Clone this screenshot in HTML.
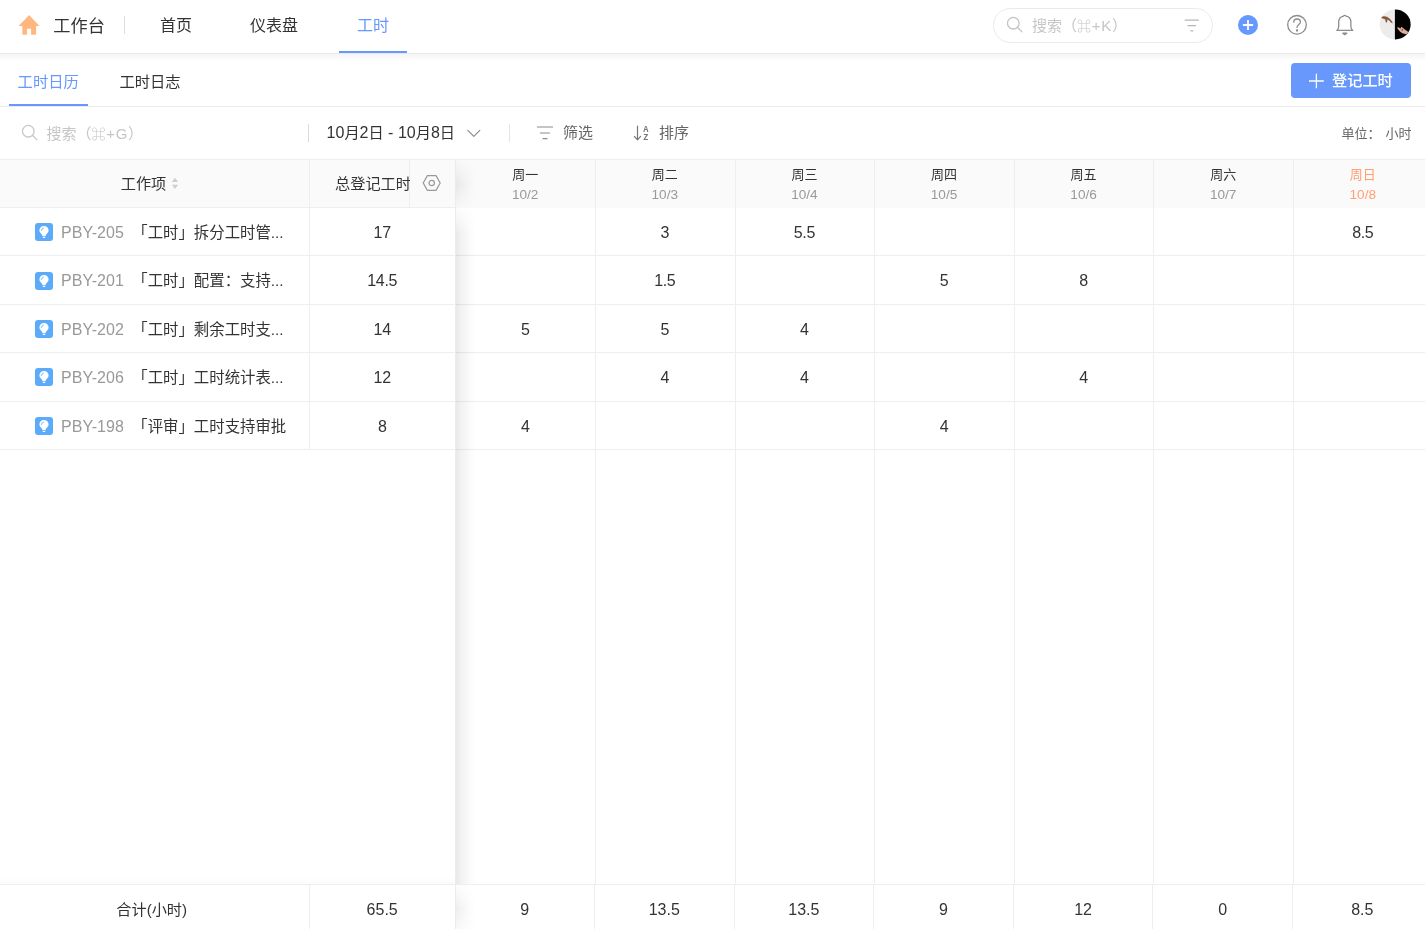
<!DOCTYPE html>
<html lang="zh-CN">
<head>
<meta charset="utf-8">
<title>工时日历</title>
<style>
*{box-sizing:border-box;margin:0;padding:0}
html,body{width:1425px;height:929px;overflow:hidden;background:#fff}
body{font-family:"Liberation Sans","Noto Sans CJK SC",sans-serif;color:#333;position:relative;font-size:15px}
#root{position:absolute;left:0;top:0;width:1425px;height:929px;opacity:.999}
.abs{position:absolute}
.t{position:absolute;white-space:nowrap;line-height:20px;height:20px}
.c{position:absolute;white-space:nowrap;text-align:center;line-height:20px;height:20px}
/* top header */
#hdr{position:absolute;left:0;top:0;width:1425px;height:54px;border-bottom:1px solid #ebebeb}
#hdrshadow{position:absolute;left:0;top:54px;width:1425px;height:7px;background:linear-gradient(#f5f5f5,#fff)}
.nav{font-size:16px;color:#333}
/* sub tabs */
#tabs{position:absolute;left:0;top:54px;width:1425px;height:53px;border-bottom:1px solid #eaeaea}
/* table */
.hl{position:absolute;height:1px;background:#eee}
.vl{position:absolute;width:1px;background:#eee}
.num{font-size:16px;color:#333;letter-spacing:-.3px}
.key{font-size:16px;color:#999;letter-spacing:.05px}
.l{font-size:16px}
.cmd{font-size:14px;font-weight:700}
.ls{letter-spacing:.7px}
.day{font-size:13px;color:#333}
.date{font-size:13.6px;color:#999}
.shadow{background:linear-gradient(to right,rgba(0,0,0,.085) 0,rgba(0,0,0,.06) 4px,rgba(0,0,0,.038) 8px,rgba(0,0,0,.016) 14px,rgba(0,0,0,0) 20px)}
</style>
</head>
<body>
<div id="root">
<!-- ===== header ===== -->
<div id="hdrshadow"></div>
<div id="hdr"></div>
<svg class="abs" style="left:18px;top:14px" width="22" height="22" viewBox="0 0 22 22"><path d="M11.16 0.9 L21.5 11.9 H18.05 V19.7 Q18.05 20.7 17.05 20.7 H13.1 V14.7 H9 V20.7 H5.3 Q4.3 20.7 4.3 19.7 V11.9 H0.6 Z" fill="#ffb77f"/></svg>
<div class="t" style="left:53.3px;top:16px;font-size:17.2px">工作台</div>
<div class="vl" style="left:124px;top:16px;height:18px;background:#ddd"></div>
<div class="t nav" style="left:160px;top:16px">首页</div>
<div class="t nav" style="left:250px;top:16px">仪表盘</div>
<div class="t nav" style="left:357px;top:16px;color:#6698ff">工时</div>
<div class="abs" style="left:339px;top:51px;width:68px;height:2px;background:#6698ff"></div>

<!-- ===== sub tabs ===== -->
<div id="tabs"></div>
<div class="t" style="left:17.6px;top:72px;font-size:15.3px;color:#6698ff">工时日历</div>
<div class="abs" style="left:9px;top:104px;width:79px;height:2px;background:#6698ff"></div>
<div class="t" style="left:119.4px;top:72px;font-size:15.3px">工时日志</div>


<!-- header search -->
<div class="abs" style="left:993px;top:8px;width:220px;height:35px;border:1px solid #eaeaea;border-radius:18px"></div>
<svg class="abs" style="left:1005px;top:15px" width="20" height="20" viewBox="0 0 20 20" fill="none" stroke="#c4c4c4" stroke-width="1.3" stroke-linecap="round"><circle cx="8.3" cy="8.2" r="5.8"/><path d="M12.6 12.5 L17 16.9"/></svg>
<div class="t" style="left:1032px;top:16px;font-size:15px;color:#c6c6c6">搜索（<span class="ls"><span class="cmd">⌘</span>+K</span>）</div>
<svg class="abs" style="left:1184px;top:17px" width="16" height="16" viewBox="0 0 16 16" fill="none" stroke="#b5b5b5" stroke-width="1.2" stroke-linecap="round"><path d="M1.2 3.2 H14.4 M4 8.6 H11.6 M6.8 13.8 H8.8"/></svg>
<!-- plus -->
<div class="abs" style="left:1238px;top:14.7px;width:20px;height:20px;border-radius:50%;background:#6698ff"></div>
<svg class="abs" style="left:1238px;top:14.7px" width="20" height="20" viewBox="0 0 20 20" fill="none" stroke="#fff" stroke-width="1.8"><path d="M10 4.9 V15.1 M4.9 10 H15.1"/></svg>
<!-- help -->
<svg class="abs" style="left:1286px;top:14px" width="22" height="22" viewBox="0 0 22 22" fill="none" stroke="#8c8c8c" stroke-width="1.3" stroke-linecap="round" stroke-linejoin="round"><circle cx="11" cy="10.8" r="9.3"/><path d="M7.7 8.2 C7.7 6.2 9.2 5 11 5 C12.9 5 14.4 6.2 14.4 8 C14.4 10.6 11 10.4 11 13.4"/><circle cx="11" cy="16.4" r="0.55" fill="#8c8c8c"/></svg>
<!-- bell -->
<svg class="abs" style="left:1334px;top:13px" width="22" height="24" viewBox="0 0 22 24" fill="none" stroke="#8c8c8c" stroke-width="1.3" stroke-linecap="round" stroke-linejoin="round"><path d="M2.8 17.4 H18.8 C17.3 16.2 16.9 15 16.9 13.4 V9.4 C16.9 5.6 14.6 3.4 11.9 3.1 C11.9 2.2 9.7 2.2 9.7 3.1 C7 3.4 4.7 5.6 4.7 9.4 V13.4 C4.7 15 4.3 16.2 2.8 17.4 Z"/><path d="M8.8 20.2 H12.8 L10.8 21.6 Z" fill="#8c8c8c"/></svg>
<!-- avatar -->
<svg class="abs" style="left:1379.4px;top:9.3px" width="32" height="31" viewBox="0 0 32 31"><defs><clipPath id="av"><ellipse cx="16.15" cy="15.4" rx="15.5" ry="15"/></clipPath></defs><g clip-path="url(#av)"><rect width="32" height="31" fill="#ecedeb"/><rect x="15.9" width="17" height="31" fill="#020202"/><path d="M1.7 9 C3 7.2 5.5 6.6 8 7.8 C10.5 9 13 11.5 13.8 14.2 C13 14.6 12 13.8 11 12.6 C10.2 11.6 9.2 10.8 8.2 10.6 C8.6 11.8 8.4 13.2 7.4 13.8 C6.6 13.4 6.4 12 6.2 10.6 C5.4 9.6 3.4 9.6 1.7 9 Z" fill="#8a583a"/><path d="M17.9 18.6 C19.5 18.4 20.8 19 21.6 19.6 L22.2 17.8 C23.4 18.4 24.6 19.6 25.8 20.4 C27 21.2 28.4 22 29.4 23 L27.8 25.2 C26 25 23.8 24.4 22.2 23.4 C20.6 22.4 19 20.6 17.9 18.6 Z" fill="#e0ae9c"/><circle cx="23.3" cy="20.8" r="0.9" fill="#7a4a3a"/></g></svg>

<!-- register button -->
<div class="abs" style="left:1291px;top:63px;width:120px;height:35px;border-radius:4px;background:#6898fb"></div>
<svg class="abs" style="left:1308px;top:72.7px" width="16" height="16" viewBox="0 0 16 16" fill="none" stroke="#fff" stroke-width="1.3"><path d="M8.4 0.8 V15.2 M1 8 H15.8"/></svg>
<div class="t" style="left:1332px;top:70.5px;font-size:15.2px;color:#fff;font-weight:500">登记工时</div>

<!-- toolbar -->
<svg class="abs" style="left:20px;top:123px" width="20" height="20" viewBox="0 0 20 20" fill="none" stroke="#c8c8c8" stroke-width="1.3" stroke-linecap="round"><circle cx="8.3" cy="8.2" r="5.8"/><path d="M12.6 12.5 L17 16.9"/></svg>
<div class="t" style="left:46.5px;top:124px;font-size:15px;color:#c6c6c6">搜索（<span class="ls"><span class="cmd">⌘</span>+G</span>）</div>
<div class="vl" style="left:308px;top:124px;height:18px;background:#dcdcdc"></div>
<div class="t" id="daterange" style="left:326.6px;top:122.5px;font-size:15.2px;color:#333"><span class="l">10</span>月<span class="l">2</span>日<span class="l"> - 10</span>月<span class="l">8</span>日</div>
<svg class="abs" style="left:466px;top:127px" width="16" height="12" viewBox="0 0 16 12" fill="none" stroke="#8c8c8c" stroke-width="1.2" stroke-linecap="round" stroke-linejoin="round"><path d="M1.8 3.3 L7.8 9.3 L13.8 3.3"/></svg>
<div class="vl" style="left:509px;top:124px;height:18px;background:#e4e4e4"></div>
<svg class="abs" style="left:536px;top:124px" width="18" height="18" viewBox="0 0 18 18" fill="none" stroke="#8c8c8c" stroke-width="1.2" stroke-linecap="round"><path d="M1.4 3 H16.6 M4.4 9 H13.6 M7 14.7 H11"/></svg>
<div class="t" style="left:563px;top:122.5px;font-size:15px;color:#666">筛选</div>
<svg class="abs" style="left:632px;top:123px" width="20" height="20" viewBox="0 0 20 20" fill="none" stroke="#777" stroke-width="1.2" stroke-linecap="round" stroke-linejoin="round"><path d="M5.5 3 V16.6 M2.4 13.4 L5.5 16.8 L8.6 13.4"/><text x="11.2" y="9.4" font-family="Liberation Mono,monospace" font-size="8.6" font-weight="700" fill="#777" stroke="none">A</text><text x="11.2" y="17.1" font-family="Liberation Mono,monospace" font-size="8.6" font-weight="700" fill="#777" stroke="none">Z</text></svg>
<div class="t" style="left:659px;top:122.5px;font-size:15px;color:#666">排序</div>
<div class="t" style="left:1341.5px;top:124px;font-size:13px;color:#666;word-spacing:1.3px">单位： 小时</div>
<!-- table -->
<div class="abs" style="left:0;top:160px;width:456px;height:47px;background:#fafafa"></div>
<div class="abs" style="left:456px;top:160px;width:969px;height:48px;background:#fafafa"></div>
<div class="hl" style="left:0;top:159px;width:1425px"></div>
<div class="hl" style="left:0;top:207px;width:456px"></div>
<div class="hl" style="left:0;top:255px;width:1425px"></div>
<div class="hl" style="left:0;top:304px;width:1425px"></div>
<div class="hl" style="left:0;top:352px;width:1425px"></div>
<div class="hl" style="left:0;top:401px;width:1425px"></div>
<div class="hl" style="left:0;top:449px;width:1425px"></div>
<div class="vl" style="left:595px;top:160px;height:724px"></div>
<div class="vl" style="left:594px;top:885px;height:44px"></div>
<div class="vl" style="left:735px;top:160px;height:724px"></div>
<div class="vl" style="left:734px;top:885px;height:44px"></div>
<div class="vl" style="left:874px;top:160px;height:724px"></div>
<div class="vl" style="left:873px;top:885px;height:44px"></div>
<div class="vl" style="left:1014px;top:160px;height:724px"></div>
<div class="vl" style="left:1013px;top:885px;height:44px"></div>
<div class="vl" style="left:1153px;top:160px;height:724px"></div>
<div class="vl" style="left:1152px;top:885px;height:44px"></div>
<div class="vl" style="left:1293px;top:160px;height:724px"></div>
<div class="vl" style="left:1292px;top:885px;height:44px"></div>
<div class="hl" style="left:0;top:884px;width:1425px"></div>
<div class="vl" style="left:309px;top:160px;height:290px"></div>
<div class="vl" style="left:309px;top:885px;height:44px"></div>
<div class="vl" style="left:455px;top:160px;height:769px;background:#ececec"></div>
<div class="vl" style="left:409px;top:160px;height:47px"></div>
<div class="abs shadow" style="left:456px;top:160px;width:22px;height:48px;-webkit-mask-image:linear-gradient(to bottom,rgba(0,0,0,.1) 0,rgba(0,0,0,.9) 52%,rgba(0,0,0,.15) 100%);mask-image:linear-gradient(to bottom,rgba(0,0,0,.1) 0,rgba(0,0,0,.9) 52%,rgba(0,0,0,.15) 100%)"></div>
<div class="abs shadow" style="left:456px;top:208px;width:22px;height:676px;-webkit-mask-image:linear-gradient(to bottom,rgba(0,0,0,.1) 0,#000 26px);mask-image:linear-gradient(to bottom,rgba(0,0,0,.1) 0,#000 26px)"></div>
<div class="abs shadow" style="left:456px;top:885px;width:22px;height:44px;-webkit-mask-image:linear-gradient(to bottom,rgba(0,0,0,.08) 0,rgba(0,0,0,.85) 24px,rgba(0,0,0,.35) 44px);mask-image:linear-gradient(to bottom,rgba(0,0,0,.08) 0,rgba(0,0,0,.85) 24px,rgba(0,0,0,.35) 44px)"></div>
<div class="abs" style="left:0;top:874px;width:455px;height:10px;background:linear-gradient(to bottom,rgba(0,0,0,0),rgba(0,0,0,.012))"></div>
<div class="c" style="left:93.5px;top:174px;width:100px;font-size:15.2px">工作项</div>
<svg class="abs" style="left:171.4px;top:177.4px" width="8" height="13" viewBox="0 0 8 13"><path d="M4 0.8 L7.2 5 H0.8 Z M4 12 L7.2 7.8 H0.8 Z" fill="#cfcfcf"/></svg>
<div class="t" style="left:335px;top:174px;width:74.5px;overflow:hidden;font-size:15.2px">总登记工时</div>
<svg class="abs" style="left:421px;top:173px" width="22" height="20" viewBox="0 0 22 20" fill="none" stroke="#999" stroke-width="1.2" stroke-linejoin="round"><path d="M2.2 10 L6.4 2.6 H15 L19.2 10 L15 17.4 H6.4 Z"/><circle cx="10.7" cy="10" r="2.7"/></svg>
<div class="c day" style="left:485.2px;top:165px;width:80px">周一</div>
<div class="c date" style="left:485.2px;top:185px;width:80px">10/2</div>
<div class="c day" style="left:624.8px;top:165px;width:80px">周二</div>
<div class="c date" style="left:624.8px;top:185px;width:80px">10/3</div>
<div class="c day" style="left:764.4px;top:165px;width:80px">周三</div>
<div class="c date" style="left:764.4px;top:185px;width:80px">10/4</div>
<div class="c day" style="left:904.0px;top:165px;width:80px">周四</div>
<div class="c date" style="left:904.0px;top:185px;width:80px">10/5</div>
<div class="c day" style="left:1043.6px;top:165px;width:80px">周五</div>
<div class="c date" style="left:1043.6px;top:185px;width:80px">10/6</div>
<div class="c day" style="left:1183.2px;top:165px;width:80px">周六</div>
<div class="c date" style="left:1183.2px;top:185px;width:80px">10/7</div>
<div class="c day" style="left:1322.8px;top:165px;width:80px;color:#ff9f73">周日</div>
<div class="c date" style="left:1322.8px;top:185px;width:80px;color:#ff9f73">10/8</div>
<svg class="abs" style="left:34.7px;top:223px" width="18" height="18" viewBox="0 0 18 18"><rect width="18" height="18" rx="3" fill="#5babfa"/><path d="M9 3 C6.3 3 4.4 5 4.4 7.3 C4.4 9 5.4 10 6.4 11 C7 11.6 7.3 12.3 7.5 13 H10.5 C10.7 12.3 11 11.6 11.6 11 C12.6 10 13.6 9 13.6 7.3 C13.6 5 11.7 3 9 3 Z M7.6 13.8 H10.4 V14.1 C10.4 14.7 10 15 9.6 15 H8.4 C8 15 7.6 14.7 7.6 14.1 Z" fill="#fff"/><path d="M6.5 7.4 C6.6 6.2 7.3 5.4 8.5 5.1" stroke="#5babfa" stroke-width="0.9" fill="none" stroke-linecap="round"/></svg>
<div class="t key" style="left:61px;top:223px">PBY-205</div>
<div class="t" style="left:132.3px;top:223px;font-size:15.4px">「工时」拆分工时管...</div>
<div class="c num" style="left:342.2px;top:223px;width:80px">17</div>
<div class="c num" style="left:624.8px;top:223px;width:80px">3</div>
<div class="c num" style="left:764.4px;top:223px;width:80px">5.5</div>
<div class="c num" style="left:1322.8px;top:223px;width:80px">8.5</div>
<svg class="abs" style="left:34.7px;top:272px" width="18" height="18" viewBox="0 0 18 18"><rect width="18" height="18" rx="3" fill="#5babfa"/><path d="M9 3 C6.3 3 4.4 5 4.4 7.3 C4.4 9 5.4 10 6.4 11 C7 11.6 7.3 12.3 7.5 13 H10.5 C10.7 12.3 11 11.6 11.6 11 C12.6 10 13.6 9 13.6 7.3 C13.6 5 11.7 3 9 3 Z M7.6 13.8 H10.4 V14.1 C10.4 14.7 10 15 9.6 15 H8.4 C8 15 7.6 14.7 7.6 14.1 Z" fill="#fff"/><path d="M6.5 7.4 C6.6 6.2 7.3 5.4 8.5 5.1" stroke="#5babfa" stroke-width="0.9" fill="none" stroke-linecap="round"/></svg>
<div class="t key" style="left:61px;top:271px">PBY-201</div>
<div class="t" style="left:132.3px;top:271px;font-size:15.4px">「工时」配置：支持...</div>
<div class="c num" style="left:342.2px;top:271px;width:80px">14.5</div>
<div class="c num" style="left:624.8px;top:271px;width:80px">1.5</div>
<div class="c num" style="left:904.0px;top:271px;width:80px">5</div>
<div class="c num" style="left:1043.6px;top:271px;width:80px">8</div>
<svg class="abs" style="left:34.7px;top:320px" width="18" height="18" viewBox="0 0 18 18"><rect width="18" height="18" rx="3" fill="#5babfa"/><path d="M9 3 C6.3 3 4.4 5 4.4 7.3 C4.4 9 5.4 10 6.4 11 C7 11.6 7.3 12.3 7.5 13 H10.5 C10.7 12.3 11 11.6 11.6 11 C12.6 10 13.6 9 13.6 7.3 C13.6 5 11.7 3 9 3 Z M7.6 13.8 H10.4 V14.1 C10.4 14.7 10 15 9.6 15 H8.4 C8 15 7.6 14.7 7.6 14.1 Z" fill="#fff"/><path d="M6.5 7.4 C6.6 6.2 7.3 5.4 8.5 5.1" stroke="#5babfa" stroke-width="0.9" fill="none" stroke-linecap="round"/></svg>
<div class="t key" style="left:61px;top:320px">PBY-202</div>
<div class="t" style="left:132.3px;top:320px;font-size:15.4px">「工时」剩余工时支...</div>
<div class="c num" style="left:342.2px;top:320px;width:80px">14</div>
<div class="c num" style="left:485.2px;top:320px;width:80px">5</div>
<div class="c num" style="left:624.8px;top:320px;width:80px">5</div>
<div class="c num" style="left:764.4px;top:320px;width:80px">4</div>
<svg class="abs" style="left:34.7px;top:368px" width="18" height="18" viewBox="0 0 18 18"><rect width="18" height="18" rx="3" fill="#5babfa"/><path d="M9 3 C6.3 3 4.4 5 4.4 7.3 C4.4 9 5.4 10 6.4 11 C7 11.6 7.3 12.3 7.5 13 H10.5 C10.7 12.3 11 11.6 11.6 11 C12.6 10 13.6 9 13.6 7.3 C13.6 5 11.7 3 9 3 Z M7.6 13.8 H10.4 V14.1 C10.4 14.7 10 15 9.6 15 H8.4 C8 15 7.6 14.7 7.6 14.1 Z" fill="#fff"/><path d="M6.5 7.4 C6.6 6.2 7.3 5.4 8.5 5.1" stroke="#5babfa" stroke-width="0.9" fill="none" stroke-linecap="round"/></svg>
<div class="t key" style="left:61px;top:368px">PBY-206</div>
<div class="t" style="left:132.3px;top:368px;font-size:15.4px">「工时」工时统计表...</div>
<div class="c num" style="left:342.2px;top:368px;width:80px">12</div>
<div class="c num" style="left:624.8px;top:368px;width:80px">4</div>
<div class="c num" style="left:764.4px;top:368px;width:80px">4</div>
<div class="c num" style="left:1043.6px;top:368px;width:80px">4</div>
<svg class="abs" style="left:34.7px;top:417px" width="18" height="18" viewBox="0 0 18 18"><rect width="18" height="18" rx="3" fill="#5babfa"/><path d="M9 3 C6.3 3 4.4 5 4.4 7.3 C4.4 9 5.4 10 6.4 11 C7 11.6 7.3 12.3 7.5 13 H10.5 C10.7 12.3 11 11.6 11.6 11 C12.6 10 13.6 9 13.6 7.3 C13.6 5 11.7 3 9 3 Z M7.6 13.8 H10.4 V14.1 C10.4 14.7 10 15 9.6 15 H8.4 C8 15 7.6 14.7 7.6 14.1 Z" fill="#fff"/><path d="M6.5 7.4 C6.6 6.2 7.3 5.4 8.5 5.1" stroke="#5babfa" stroke-width="0.9" fill="none" stroke-linecap="round"/></svg>
<div class="t key" style="left:61px;top:417px">PBY-198</div>
<div class="t" style="left:132.3px;top:417px;font-size:15.4px">「评审」工时支持审批</div>
<div class="c num" style="left:342.2px;top:417px;width:80px">8</div>
<div class="c num" style="left:485.2px;top:417px;width:80px">4</div>
<div class="c num" style="left:904.0px;top:417px;width:80px">4</div>
<div class="c" style="left:101.7px;top:900px;width:100px;font-size:15.2px">合计(小时)</div>
<div class="c num" style="left:342.2px;top:900px;width:80px;font-size:16px;letter-spacing:0">65.5</div>
<div class="c num" style="left:484.7px;top:900px;width:80px;font-size:16px;letter-spacing:0">9</div>
<div class="c num" style="left:624.3px;top:900px;width:80px;font-size:16px;letter-spacing:0">13.5</div>
<div class="c num" style="left:763.9px;top:900px;width:80px;font-size:16px;letter-spacing:0">13.5</div>
<div class="c num" style="left:903.5px;top:900px;width:80px;font-size:16px;letter-spacing:0">9</div>
<div class="c num" style="left:1043.1px;top:900px;width:80px;font-size:16px;letter-spacing:0">12</div>
<div class="c num" style="left:1182.7px;top:900px;width:80px;font-size:16px;letter-spacing:0">0</div>
<div class="c num" style="left:1322.3px;top:900px;width:80px;font-size:16px;letter-spacing:0">8.5</div>
</div>
</body>
</html>
